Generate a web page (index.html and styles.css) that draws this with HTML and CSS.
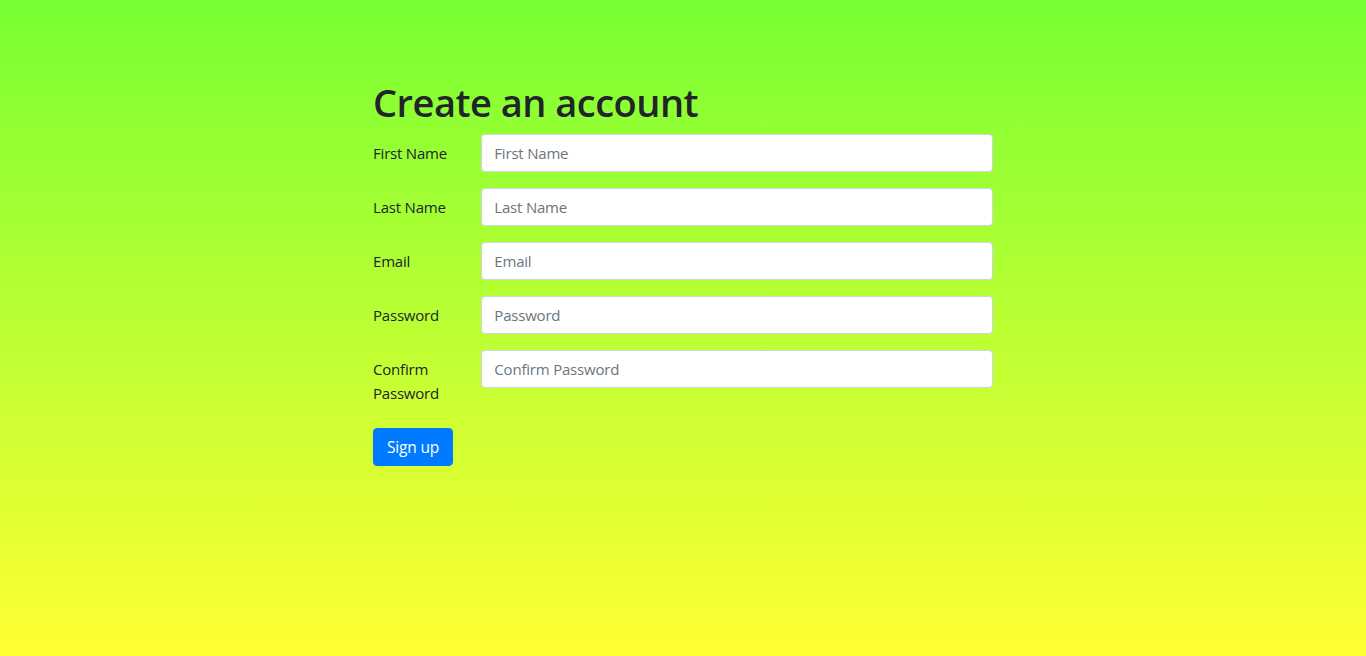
FILE: index.html
```html
<!DOCTYPE html>
<html lang="en">
<head>
<meta charset="utf-8">
<title>Create an account</title>
<link rel="stylesheet" href="styles.css">
</head>
<body>
<div class="container">
  <h1 class="title">Create an account</h1>
  <form class="form">
    <div class="row">
      <label class="label" for="fn">First Name</label>
      <div class="field"><input id="fn" class="input" type="text" placeholder="First Name"></div>
    </div>
    <div class="row">
      <label class="label" for="ln">Last Name</label>
      <div class="field"><input id="ln" class="input" type="text" placeholder="Last Name"></div>
    </div>
    <div class="row">
      <label class="label" for="em">Email</label>
      <div class="field"><input id="em" class="input" type="email" placeholder="Email"></div>
    </div>
    <div class="row">
      <label class="label" for="pw">Password</label>
      <div class="field"><input id="pw" class="input" type="password" placeholder="Password"></div>
    </div>
    <div class="row">
      <label class="label" for="cpw">Confirm Password</label>
      <div class="field"><input id="cpw" class="input" type="password" placeholder="Confirm Password"></div>
    </div>
    <button type="button" class="btn">Sign up</button>
  </form>
</div>
</body>
</html>
```
FILE: styles.css
```css
html, body {
  margin: 0;
  padding: 0;
}
body {
  min-height: 100vh;
  background: linear-gradient(to bottom, #77ff33 0%, #ffff33 100%);
  font-family: "Open Sans", "Noto Sans", sans-serif;
  font-size: 15px;
  letter-spacing: -0.2px;
  line-height: 1.5;
  color: #212529;
}
.container {
  max-width: 620px;
  margin: 0 auto;
  padding: 78px 15px 0;
}
.title {
  margin: 0 0 8px;
  height: 48px;
  font-size: 38px;
  font-weight: 600;
  line-height: 48px;
  letter-spacing: -0.5px;
}
.form {
  display: flex;
  flex-direction: column;
  align-items: flex-start;
}
.row {
  display: grid;
  grid-template-columns: 108.33px 1fr;
  width: 650px;
  margin: 0 -15px 16px;
  align-self: stretch;
}
.label {
  padding: 7px 15px;
  font-size: 15px;
  line-height: 24px;
}
.field {
  padding: 0 15px;
}
.input {
  box-sizing: border-box;
  display: block;
  width: 100%;
  height: 38px;
  padding: 6px 12px;
  font-family: inherit;
  font-size: 15px;
  letter-spacing: -0.2px;
  line-height: 24px;
  color: #495057;
  background: #fff;
  border: 1px solid #ced4da;
  border-radius: 4px;
  outline: none;
}
.input::placeholder {
  color: #6c757d;
  opacity: 1;
}
.btn {
  box-sizing: border-box;
  height: 38px;
  width: 80px;
  padding: 6px 0;
  font-family: inherit;
  font-size: 15.5px;
  letter-spacing: -0.2px;
  line-height: 24px;
  color: #fff;
  background: #007bff;
  border: 1px solid #007bff;
  border-radius: 4px;
  cursor: pointer;
}
```
